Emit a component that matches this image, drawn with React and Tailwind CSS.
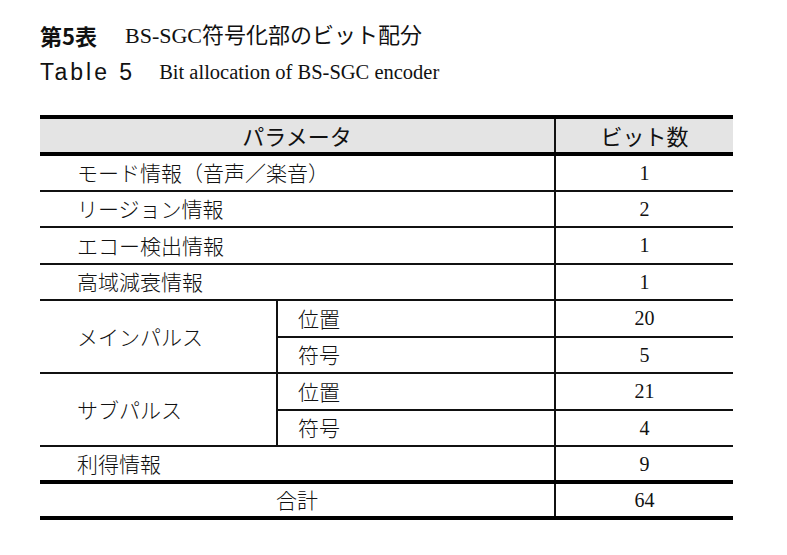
const jp = { fontFamily: '"Noto Sans CJK JP", sans-serif' };

const rows = [
  { label: "モード情報（音声／楽音）", bits: "1" },
  { label: "リージョン情報", bits: "2" },
  { label: "エコー検出情報", bits: "1" },
  { label: "高域減衰情報", bits: "1" },
];

const pulses = [
  { label: "メインパルス", parts: [["位置", "20"], ["符号", "5"]] },
  { label: "サブパルス", parts: [["位置", "21"], ["符号", "4"]] },
];

const Num = ({ children }) => (
  <td className="border-l-2 border-[#111] text-center font-['Liberation_Serif',serif] text-[20px]">
    {children}
  </td>
);

const App = () => {
  return (
    <div className="w-[787px] h-[555px] bg-white text-[#111] pt-[18px]">
      <div className="pl-[40px] flex items-center h-[34px]">
        <span className="text-[22px] font-bold" style={jp}>
          第5表
        </span>
        <span className="ml-[28px] text-[22px] font-['Liberation_Serif','Noto_Sans_CJK_JP',serif]">
          BS-SGC符号化部のビット配分
        </span>
      </div>
      <div className="pl-[40px] mt-[6px] flex items-center h-[28px]">
        <span className="text-[23px] tracking-[3px] font-['Liberation_Sans',sans-serif]">
          Table 5
        </span>
        <span className="ml-[24px] text-[20.5px] font-['Liberation_Serif',serif]">
          Bit allocation of BS-SGC encoder
        </span>
      </div>

      <table
        className="ml-[40px] mt-[29px] w-[693px] table-fixed border-collapse border-t-4 border-b-4 border-black"
        style={jp}
      >
        <colgroup>
          <col className="w-[237px]" />
          <col className="w-[278px]" />
          <col className="w-[178px]" />
        </colgroup>
        <thead>
          <tr className="h-[32px] bg-[#e4e4e4] border-b-4 border-black">
            <th colSpan={2} className="font-normal text-[22px] text-center">
              パラメータ
            </th>
            <th className="font-normal text-[22px] text-center border-l-2 border-[#111]">
              ビット数
            </th>
          </tr>
        </thead>
        <tbody className="text-[21px] font-light">
          {rows.map((r) => (
            <tr key={r.label} className="h-[36.5px] border-b-2 border-[#111]">
              <td colSpan={2} className="pl-[37px] text-left">
                {r.label}
              </td>
              <Num>{r.bits}</Num>
            </tr>
          ))}
          {pulses.map((p) =>
            p.parts.map(([sub, bits], i) => (
              <tr key={p.label + sub} className="h-[36.5px] border-b-2 border-[#111]">
                {i === 0 && (
                  <td rowSpan={2} className="pl-[37px] text-left border-r-2 border-[#111]">
                    {p.label}
                  </td>
                )}
                <td className="pl-[20px] text-left">{sub}</td>
                <Num>{bits}</Num>
              </tr>
            ))
          )}
          <tr className="h-[36px] border-b-4 border-black">
            <td colSpan={2} className="pl-[37px] text-left">
              利得情報
            </td>
            <Num>9</Num>
          </tr>
          <tr className="h-[34px]">
            <td colSpan={2} className="text-center">
              合計
            </td>
            <Num>64</Num>
          </tr>
        </tbody>
      </table>
    </div>
  );
};

export default App;
